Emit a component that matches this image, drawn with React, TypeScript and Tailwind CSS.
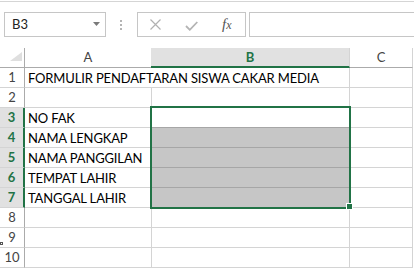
const rows: { n: number; a: string }[] = [
  { n: 1, a: 'FORMULIR PENDAFTARAN SISWA CAKAR MEDIA' },
  { n: 2, a: '' },
  { n: 3, a: 'NO FAK' },
  { n: 4, a: 'NAMA LENGKAP' },
  { n: 5, a: 'NAMA PANGGILAN' },
  { n: 6, a: 'TEMPAT LAHIR' },
  { n: 7, a: 'TANGGAL LAHIR' },
  { n: 8, a: '' },
  { n: 9, a: '' },
  { n: 10, a: '' },
]

function FormulaBar() {
  return (
    <div className="h-[48px] pt-px">
      <div className="border-t border-t-[#d5d5d5]" />
      <div className="mt-[10px] flex items-start h-[25px] pl-[4px]">
        {/* Name box */}
        <div className="w-[102px] h-[25px] border border-[#c6c6c6] flex items-center justify-between pl-[7px] pr-[5px]">
          <span className="text-[13px] leading-[23px] text-[#222]">B3</span>
          <svg width="7" height="4" viewBox="0 0 7 4" className="-mt-[2px]" aria-hidden="true">
            <polygon points="0,0 7,0 3.5,4" fill="#7a7a7a" />
          </svg>
        </div>

        {/* Grip dots */}
        <div className="ml-[14px] mt-[8px] flex flex-col gap-[2px]">
          <span className="w-[2px] h-[2px] bg-[#b4b4b4]" />
          <span className="w-[2px] h-[2px] bg-[#b4b4b4]" />
          <span className="w-[2px] h-[2px] bg-[#b4b4b4]" />
        </div>

        {/* Cancel / enter / fx */}
        <div className="ml-[15px] w-[109px] h-[25px] border border-[#c6c6c6] flex items-center pl-[12px] gap-[24px]">
          <svg width="11" height="11" viewBox="0 0 11 11" fill="none" aria-hidden="true">
            <path d="M0.5 0.5l10 10M10.5 0.5l-10 10" stroke="#b1b1b1" strokeWidth="1.2" />
          </svg>
          <svg width="13" height="10" viewBox="0 0 13 10" fill="none" className="mt-[2px]" aria-hidden="true">
            <path d="M1 5l3.8 3.8L12.3 1" stroke="#b4b4b4" strokeWidth="1.8" />
          </svg>
          <span className="font-['Liberation_Serif',serif] italic text-[15px] leading-[23px] text-[#555]">
            f<span className="text-[12px]">x</span>
          </span>
        </div>

        {/* Formula input */}
        <div className="ml-[3px] flex-1 h-[25px] border border-[#c6c6c6] border-r-0" />
      </div>
    </div>
  )
}

function HeaderRow() {
  return (
    <div className="flex h-[20px] text-[13px] leading-[19px]">
      <div className="w-[25px] shrink-0 border-r border-r-[#ababab] border-b border-b-[#ababab] flex items-end justify-end pr-[2px] pb-[6px]">
        <svg width="12" height="9" viewBox="0 0 12 9" aria-hidden="true">
          <polygon points="12,0 12,9 0,9" fill="#dfdfdf" />
        </svg>
      </div>
      <div className="w-[126px] shrink-0 border-b border-b-[#ababab] text-center text-[#444]">A</div>
      <div className="w-[199px] shrink-0 bg-[#e1e1e1] border-r border-r-[#d4d4d4] border-b-2 border-b-[#217346] text-center font-bold text-[#217346]">
        B
      </div>
      <div className="w-[63px] shrink-0 border-r border-r-[#d4d4d4] border-b border-b-[#ababab] text-center text-[#444]">C</div>
    </div>
  )
}

function SheetRow({ n, a }: { n: number; a: string }) {
  const inRange = n >= 3 && n <= 7
  const active = n === 3
  return (
    <div className="flex h-[20px] text-[13px]">
      <div
        className={`w-[25px] shrink-0 border-b border-b-[#d4d4d4] text-center leading-[19px] ${
          inRange
            ? 'bg-[#e1e1e1] border-r-2 border-r-[#217346] font-bold text-[#217346]'
            : 'border-r border-r-[#ababab] text-[#444]'
        }`}
      >
        {n}
      </div>
      {/* Row 1's title spills over B, so no divider there */}
      <div
        className={`w-[127px] shrink-0 border-b border-b-[#d4d4d4] pl-[3px] pt-[2px] leading-[17px] tracking-[-0.15px] whitespace-nowrap text-black ${
          n === 1 ? 'relative z-10' : 'border-r border-r-[#d4d4d4]'
        }`}
      >
        {a}
      </div>
      <div
        className={`w-[198px] shrink-0 border-r border-r-[#d4d4d4] border-b ${
          inRange && !active ? 'bg-[#c6c6c6] border-b-[#a6a6a6]' : active ? 'border-b-[#a6a6a6]' : 'border-b-[#d4d4d4]'
        }`}
      />
      <div className="w-[63px] shrink-0 border-r border-r-[#d4d4d4] border-b border-b-[#d4d4d4]" />
    </div>
  )
}

export default function App() {
  return (
    <div className="relative w-[414px] h-[268px] overflow-hidden bg-white font-[Lato,sans-serif]">
      <FormulaBar />
      <HeaderRow />
      {rows.map((r) => (
        <SheetRow key={r.n} n={r.n} a={r.a} />
      ))}

      {/* Selection B3:B7 */}
      <div className="absolute left-[150px] top-[106px] w-[201px] h-[103px] border-2 border-[#217346] pointer-events-none" />
      <div className="absolute left-[346px] top-[203px] w-[7px] h-[7px] bg-[#217346] border border-white pointer-events-none" />

      {/* stray cursor mark */}
      <div className="absolute left-0 top-[242px] w-[3px] h-[3px] border border-[#555]" />
    </div>
  )
}
